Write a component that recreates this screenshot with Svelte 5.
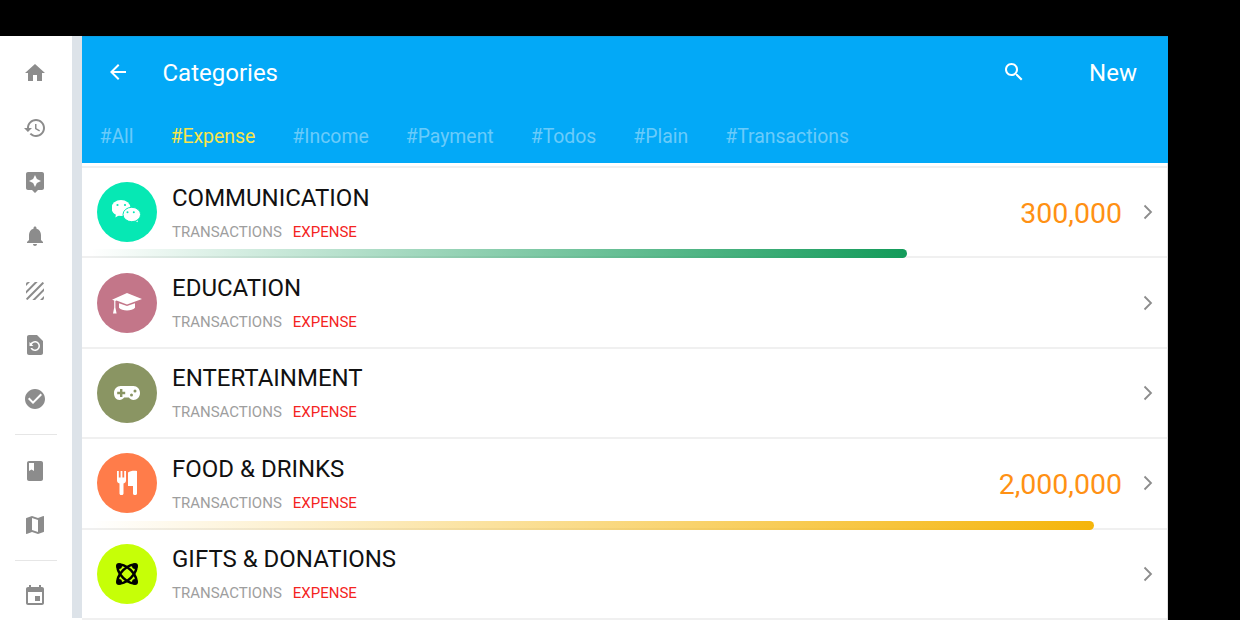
<script>
  const nav = [
    ['M10 20v-6h4v6h5v-8h3L12 3 2 12h3v8z'],
    ['M13 3c-4.97 0-9 4.03-9 9H1l3.89 3.89.07.14L9 12H6c0-3.87 3.13-7 7-7s7 3.13 7 7-3.13 7-7 7c-1.93 0-3.68-.79-4.94-2.06l-1.42 1.42C8.27 19.99 10.51 21 13 21c4.97 0 9-4.03 9-9s-4.03-9-9-9zm-1 5v5l4.28 2.54.72-1.21-3.5-2.08V8H12z'],
    ['M19 2H5c-1.1 0-2 .9-2 2v14c0 1.1.9 2 2 2h4l3 3 3-3h4c1.1 0 2-.9 2-2V4c0-1.1-.9-2-2-2zm-5.12 10.88L12 17l-1.88-4.12L6 11l4.12-1.88L12 5l1.88 4.12L18 11l-4.12 1.88z'],
    ['M12 22c1.1 0 2-.9 2-2h-4c0 1.1.89 2 2 2zm6-6v-5c0-3.07-1.64-5.64-4.5-6.32V4c0-.83-.67-1.5-1.5-1.5s-1.5.67-1.5 1.5v.68C7.63 5.36 6 7.92 6 11v5l-2 2v1h16v-1l-2-2z'],
    ['M19.51 3.08L3.08 19.51c.09.34.27.65.51.9.25.24.56.42.9.51L20.93 4.49c-.19-.69-.73-1.23-1.42-1.41zM11.88 3L3 11.88v2.83L14.71 3h-2.83zM5 3c-1.1 0-2 .9-2 2v2l4-4H5zm14 18c.55 0 1.05-.22 1.41-.59.37-.36.59-.86.59-1.41v-2l-4 4h2zm-9.71 0h2.83L21 12.12V9.29L9.29 21z'],
    ['M14 2H6c-1.1 0-1.99.9-1.99 2L4 20c0 1.1.89 2 1.99 2H18c1.1 0 2-.9 2-2V8l-6-6zm-2 16c-2.05 0-3.81-1.24-4.58-3h1.71c.63.9 1.68 1.5 2.87 1.5 1.93 0 3.5-1.57 3.5-3.5S13.93 9.5 12 9.5c-1.35 0-2.52.78-3.1 1.9l1.6 1.6h-4V9l1.3 1.3C8.69 8.92 10.23 8 12 8c2.76 0 5 2.24 5 5s-2.24 5-5 5z'],
    ['M12 2C6.48 2 2 6.48 2 12s4.48 10 10 10 10-4.48 10-10S17.52 2 12 2zm-2 15l-5-5 1.41-1.41L10 14.17l7.59-7.59L19 8l-9 9z'],
    null,
    ['M18 2H6c-1.1 0-2 .9-2 2v16c0 1.1.9 2 2 2h12c1.1 0 2-.9 2-2V4c0-1.1-.9-2-2-2zM6 4h5v8l-2.5-1.5L6 12V4z'],
    ['M20.5 3l-.16.03L15 5.1 9 3 3.36 4.9c-.21.07-.36.25-.36.48V20.5c0 .28.22.5.5.5l.16-.03L9 18.9l6 2.1 5.64-1.9c.21-.07.36-.25.36-.48V3.5c0-.28-.22-.5-.5-.5zM15 19l-6-2.11V5l6 2.11V19z'],
    null,
    ['M17 12h-5v5h5v-5zM16 1v2H8V1H6v2H5c-1.11 0-1.99.9-1.99 2L3 19c0 1.1.89 2 2 2h14c1.1 0 2-.9 2-2V5c0-1.1-.9-2-2-2h-1V1h-2zm3 18H5V8h14v11z']
  ];
  const tabs = ['#All', '#Expense', '#Income', '#Payment', '#Todos', '#Plain', '#Transactions'];
  const rows = [
    { name: 'COMMUNICATION', color: '#06e8b4', icon: 'chat', amount: '300,000', bar: 816, barClass: 'green' },
    { name: 'EDUCATION', color: '#c37689', icon: 'cap' },
    { name: 'ENTERTAINMENT', color: '#8a9563', icon: 'pad' },
    { name: 'FOOD & DRINKS', color: '#ff7c4a', icon: 'food', amount: '2,000,000', bar: 1003, barClass: 'amber' },
    { name: 'GIFTS & DONATIONS', color: '#c6ff07', icon: 'joomla' }
  ];
</script>

<div class="screen">
  <aside class="rail">
    {#each nav as item}
      {#if item}
        <span class="rail-slot"><svg viewBox="0 0 24 24" class="rail-icon"><path d={item[0]} /></svg></span>
      {:else}
        <hr class="rail-rule" />
      {/if}
    {/each}
  </aside>
  <div class="seam"></div>
  <main class="panel">
    <header class="head">
      <div class="bar">
        <svg viewBox="0 0 24 24" class="back"><path d="M20 11H7.83l5.59-5.59L12 4l-8 8 8 8 1.41-1.41L7.83 13H20v-2z" /></svg>
        <h1>Categories</h1>
        <svg viewBox="0 0 24 24" class="search"><path d="M15.5 14h-.79l-.28-.27C15.41 12.59 16 11.11 16 9.5 16 5.91 13.09 3 9.5 3S3 5.91 3 9.5 5.91 16 9.5 16c1.61 0 3.09-.59 4.23-1.57l.27.28v.79l5 4.99L20.49 19l-4.99-5zm-6 0C7.01 14 5 11.99 5 9.5S7.01 5 9.5 5 14 7.01 14 9.5 11.99 14 9.5 14z" /></svg>
        <span class="new">New</span>
      </div>
      <nav class="tabs">
        {#each tabs as t, i}
          <span class="tab" class:active={i === 1}>{t}</span>
        {/each}
      </nav>
    </header>
    <div class="list">
      {#each rows as r}
        <div class="row">
          <span class="badge" style="background:{r.color}">
            {#if r.icon === 'chat'}
              <svg viewBox="0 0 30 30" class="glyph">
                <path fill="#fff" d="M4 17l-.6 3.500L7.500 18z" />
                <ellipse cx="9" cy="11" rx="9.500" ry="8" fill="#fff" />
                <path fill="#fff" d="M25 22l1 3.200-4.500-2.200z" />
                <ellipse cx="19.800" cy="17.500" rx="8.800" ry="7.200" fill="#fff" stroke="#06e8b4" stroke-width="1" />
                <circle cx="5.500" cy="8" r="1.100" fill="#06e8b4" /><circle cx="13" cy="8" r="1.100" fill="#06e8b4" />
                <circle cx="15.500" cy="15.200" r="1" fill="#06e8b4" /><circle cx="21.800" cy="15.200" r="1" fill="#06e8b4" />
              </svg>
            {:else if r.icon === 'cap'}
              <svg viewBox="0 0 32 24" class="glyph wide">
                <path fill="#fff" d="M16 2 31 8 16 13.500 5.500 9.600 4.400 10v6.600l1.200 6H2l1.200-6v-7L1 8.700z" />
                <path fill="#fff" d="M8 12.200 16 15l8-2.800v4.600c-1.600 1.700-4.600 2.700-8 2.700s-6.400-1-8-2.700z" />
              </svg>
            {:else if r.icon === 'pad'}
              <svg viewBox="0 0 30 30" class="glyph">
                <path fill="#fff" fill-rule="evenodd" d="M8.500 8h13c3.600 0 6.500 3 6.500 7s-2.900 7-6.500 7c-2 0-3.400-1-4.600-2.500h-4.800C11 21 9.500 22 7.500 22 4 22 2 19 2 15s3-7 6.500-7zM8 11v2.800H5.200v2.400H8V19h2.400v-2.800h2.800v-2.400h-2.800V11zm11.500 4.500a1.500 1.500 0 1 0 0 3 1.500 1.500 0 0 0 0-3zm3.500-4a1.500 1.500 0 1 0 0 3 1.500 1.500 0 0 0 0-3z" />
              </svg>
            {:else if r.icon === 'food'}
              <svg viewBox="0 0 30 30" class="glyph">
                <path fill="#fff" d="M5 3h1.800v6.500H8.600V3h1.800v6.500h1.800V3H14v9.500c0 1.500-1 2.600-2.500 3.100V25.500c0 .8-.7 1.500-1.500 1.500H9c-.8 0-1.500-.7-1.500-1.500V15.600C6 15.100 5 14 5 12.500z" />
                <path fill="#fff" d="M16 4.500C18 3 21.500 2.500 25 3v22.500c0 .8-.7 1.500-1.500 1.500h-1c-.8 0-1.500-.7-1.500-1.500V18h-5z" />
              </svg>
            {:else}
              <svg viewBox="0 0 30 30" class="glyph">
                <g fill="none" stroke="#000" stroke-width="2.500">
                  <ellipse cx="15" cy="15" rx="12" ry="5.400" transform="rotate(45 15 15)" />
                  <ellipse cx="15" cy="15" rx="12" ry="5.400" transform="rotate(-45 15 15)" />
                </g>
                <circle cx="7" cy="7" r="3" /><circle cx="23" cy="7" r="3" />
                <circle cx="7" cy="23" r="3" /><circle cx="23" cy="23" r="3" />
              </svg>
            {/if}
          </span>
          <div class="text">
            <div class="name">{r.name}</div>
            <div class="meta"><span>TRANSACTIONS</span><span class="kind">EXPENSE</span></div>
          </div>
          {#if r.amount}<span class="amount">{r.amount}</span>{/if}
          <svg viewBox="0 0 12 18" class="chev"><path d="M2.500 2.500 9 9l-6.500 6.500" /></svg>
          {#if r.bar}<span class="progress {r.barClass}" style="width:{r.bar}px"></span>{/if}
        </div>
      {/each}
    </div>
  </main>
</div>

<style>
  :global(body) { margin: 0; background: #000; }
  .screen {
    width: 1240px; height: 620px; overflow: hidden;
    display: flex; align-items: flex-start;
    padding-top: 36px; box-sizing: border-box;
    font-family: Roboto, sans-serif;
  }
  .rail {
    width: 72px; height: 584px; flex: none; background: #fff;
    display: flex; flex-direction: column; align-items: center;
    padding-top: 10.300px; box-sizing: border-box;
  }
  .rail-slot { height: 54.300px; flex: none; display: flex; align-items: center; justify-content: center; width: 100%; }
  .rail-icon { width: 24px; height: 24px; fill: #8c8c8c; margin-left: -2px; }
  .rail-rule { width: 42px; height: 1px; border: 0; background: #e6e6e6; margin: 8px 0; flex: none; }
  .seam { width: 10px; height: 582px; flex: none; background: #dde3e9; border-bottom: 2px solid #fff; box-sizing: content-box; }
  .panel { width: 1086px; height: 584px; flex: none; background: #fff; overflow: hidden; }
  .head { background: #03a9f7; height: 127px; border-top: 1px solid #0a9fe6; box-sizing: border-box; }
  .bar { height: 72px; display: flex; align-items: center; }
  .back { width: 24px; height: 24px; fill: #fff; margin: 0 0 2px 24px; }
  h1 { margin: 0 0 0 32.500px; font-size: 24px; font-weight: 400; color: #fff; flex: 1; }
  .search { width: 24px; height: 24px; fill: #fff; margin-bottom: 2px; }
  .new { font-size: 24px; color: #fff; margin: 0 31px 0 63px; }
  .tabs { display: flex; gap: 37px; padding: 16px 0 0 17.500px; }
  .tab { font-size: 19.400px; color: rgba(255,255,255,.42); }
  .tab.active { color: #f8e44b; }
  .list { padding-top: 5px; border-right: 1px solid #e0e0e0; height: 452px; }
  .row {
    position: relative; height: 90.400px; box-sizing: border-box;
    display: flex; align-items: center; padding: 0 8px 0 15px;
    border-bottom: 2px solid #f0f0f0;
  }
  .row:first-child { box-shadow: 0 -2px 0 #f0f0f0; }
  .badge { width: 60px; height: 60px; border-radius: 50%; flex: none; display: flex; align-items: center; justify-content: center; }
  .glyph { width: 30px; height: 30px; }
  .glyph.wide { width: 32px; height: 24px; }
  .text { margin: 0 0 1px 15px; flex: 1; }
  .name { font-size: 24px; line-height: 30px; color: #111; }
  .meta { font-size: 15px; line-height: 18px; margin-top: 10px; color: #9e9e9e; display: flex; gap: 11px; }
  .kind { color: #f4251f; }
  .amount { font-size: 28.500px; color: #ff9114; margin: 2px 20px 0 0; }
  .chev { width: 12px; height: 18px; fill: none; stroke: #8c8c8c; stroke-width: 1.800; margin-right: 5px; }
  .progress { position: absolute; left: 9px; bottom: -2px; height: 9px; border-radius: 0 5px 5px 0; }
  .green { background: linear-gradient(90deg, rgba(19,155,90,0), #139b5a); }
  .amber { background: linear-gradient(90deg, rgba(245,181,10,0), #f5b50a); }
</style>
